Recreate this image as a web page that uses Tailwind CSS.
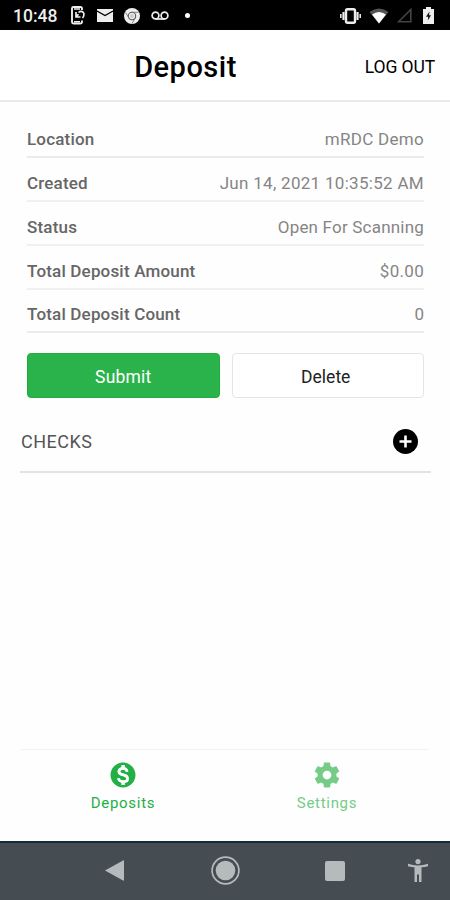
<!DOCTYPE html>
<html lang="en">
<head>
<meta charset="utf-8">
<title>Deposit</title>
<script src="https://cdn.jsdelivr.net/npm/@tailwindcss/browser@4"></script>
</head>
<body class="bg-white">
<div class="w-[450px] h-[900px] flex flex-col overflow-hidden bg-[#fefefe] font-['Roboto',sans-serif] text-black">
  <div class="h-[30px] shrink-0 bg-black flex items-center justify-between pl-[13px] pr-[14px] pt-px text-[#eee]">
    <div class="flex items-center">
      <span class="w-[57px] text-[17.5px] leading-[30px] font-medium">10:48</span>
      <svg class="w-4 h-[19px]" viewBox="0 0 16 19" fill="none" stroke="currentColor"><path d="M12 4V2.500Q12 1 10.500 1H3.500Q2 1 2 2.500V16Q2 17.500 3.500 17.500H10.500Q12 17.500 12 16V14.500" stroke-width="1.900"/><path d="M4 3H10M4 15.800H10" stroke-width="1.500"/><path d="M6 6V11H10.500M6.500 10.500L8.500 8.200" stroke-width="1.700"/><path d="M8.500 6.500Q11 4.200 13.200 6.300Q15 9 12.500 12" stroke-width="1.600"/></svg>
      <svg class="ml-[11px] w-4 h-[13px]" viewBox="0 0 16 13"><path fill="currentColor" d="M0 0H16V13H0Z"/><path d="M0 2L8 6.500L16 2" fill="none" stroke="#000" stroke-width="1.300"/></svg>
      <svg class="ml-[11px] w-4 h-4" viewBox="0 0 16 16" fill="none"><circle cx="8" cy="8" r="8" fill="currentColor"/><circle cx="8" cy="8" r="3.700" stroke="#555" stroke-width="1.100"/><path d="M8 4.300H14.500M4.900 10L1.700 4.600M11.100 10L8 15.500" stroke="#777" stroke-width=".9"/><circle cx="8" cy="8" r="2" fill="#ccc"/></svg>
      <svg class="ml-[11px] w-[18px] h-[9px]" viewBox="0 0 18 9" fill="none" stroke="currentColor" stroke-width="1.700"><circle cx="4.500" cy="4.500" r="3.400"/><circle cx="13.500" cy="4.500" r="3.400"/><path d="M4.500 8H13.500"/></svg>
      <span class="ml-4 w-[5px] h-[5px] rounded-full bg-white"></span>
    </div>
    <div class="flex items-center">
      <svg class="w-[21px] h-4" viewBox="0 0 21 16" fill="none" stroke="currentColor"><rect x="6" y="1.200" width="9" height="13.600" rx="1.500" stroke-width="2.400"/><path d="M3.500 4V12M17.500 4V12" stroke-width="2.200"/><path d="M.8 6V10M20.200 6V10" stroke-width="1.500"/></svg>
      <svg class="ml-2 w-5 h-4" viewBox="0 0 20 16"><path d="M.5 4Q10-3 19.500 4L10 15.500Z" fill="#555"/><path d="M3 6.500Q10 1.500 17 6.500L10 15.500Z" fill="#fff"/></svg>
      <svg class="ml-2 w-[15px] h-[15px]" viewBox="0 0 15 15"><path d="M1.500 13.800H13.800V1.500Z" fill="none" stroke="#454545" stroke-width="1.600"/></svg>
      <svg class="ml-[11px] mr-[2px] w-[11px] h-[17px]" viewBox="0 0 11 17"><path d="M3 0H8V2H11V17H0V2H3Z" fill="currentColor"/><path d="M6.500 4.500L3 9.700H5.200L4.800 13.500L8 8.200H6Z" fill="#111"/></svg>
    </div>
  </div>

  <header class="h-[72px] shrink-0 bg-white border-b-2 border-[#e9e9e9] grid grid-cols-[120px_131px_1fr] items-center">
    <span></span>
    <h1 class="text-center text-[29px] leading-9 font-medium tracking-[0.5px] pt-[4px]">Deposit</h1>
    <button class="justify-self-end mr-[15px] text-[17.5px] leading-6 pt-[4px] tracking-[-0.1px] whitespace-nowrap">LOG OUT</button>
  </header>

  <main class="flex-1 flex flex-col">
    <dl class="mx-[27px] mr-[26px] mt-3 text-[17px] leading-5 text-[#858585]">
      <div class="h-[44px] flex items-end justify-between pb-[7px] border-b-2 border-[#ebebeb]"><dt class="font-medium text-[#666] tracking-[0.18px]">Location</dt><dd class="tracking-[0.3px]">mRDC Demo</dd></div>
      <div class="h-[44px] flex items-end justify-between pb-[7px] border-b-2 border-[#f0f0f0]"><dt class="font-medium text-[#666] tracking-[0.18px]">Created</dt><dd class="tracking-[0.3px]">Jun 14, 2021 10:35:52 AM</dd></div>
      <div class="h-[44px] flex items-end justify-between pb-[7px] border-b-2 border-[#f0f0f0]"><dt class="font-medium text-[#666] tracking-[0.18px]">Status</dt><dd class="tracking-[0.2px]">Open For Scanning</dd></div>
      <div class="h-[43.5px] flex items-end justify-between pb-[7px] border-b-2 border-[#f0f0f0]"><dt class="font-medium text-[#666] tracking-[0.18px]">Total Deposit Amount</dt><dd class="tracking-[0.3px]">$0.00</dd></div>
      <div class="h-[43.5px] flex items-end justify-between pb-[7px] border-b-2 border-[#ebebeb]"><dt class="font-medium text-[#666] tracking-[0.18px]">Total Deposit Count</dt><dd>0</dd></div>
    </dl>
    <div class="ml-[27px] mr-[26px] mt-5 grid grid-cols-2 gap-3 text-[17.5px] leading-6">
      <button class="h-[45px] rounded-[4px] bg-[#2ab34b] border border-[#1fae3e] text-white pt-[2px] tracking-[0.2px]">Submit</button>
      <button class="h-[45px] rounded-[4px] bg-white border border-[#e5e5e5] text-[#222] pt-[2px] pr-1">Delete</button>
    </div>
    <div class="ml-5 mr-[19px] h-[75px] border-b-2 border-[#e3e3e3] flex items-center justify-between pt-[14px]">
      <h2 class="pl-px text-[18px] leading-6 text-[#555] tracking-[0.5px] pt-px">CHECKS</h2>
      <svg class="mr-[13px] w-[25px] h-[25px]" viewBox="0 0 25 25"><circle cx="12.500" cy="12.500" r="12.500"/><path d="M12.500 6.500V18.500M6.500 12.500H18.500" stroke="#fff" stroke-width="2.600"/></svg>
    </div>
  </main>

  <nav class="mx-[21px] h-[92px] shrink-0 border-t border-[#f3f3f3] grid grid-cols-2 text-[15px] leading-5 tracking-[0.7px]">
    <div class="flex flex-col items-center pt-[10px] text-[#22b045]">
      <svg class="w-[30px] h-[30px]" viewBox="0 0 24 24" fill="currentColor"><path d="M12 2C6.480 2 2 6.480 2 12s4.480 10 10 10 10-4.480 10-10S17.520 2 12 2zm1.410 16.090V20h-2.670v-1.930c-1.710-.36-3.160-1.460-3.270-3.400h1.960c.1 1.050.82 1.870 2.650 1.870 1.960 0 2.400-.98 2.400-1.590 0-.83-.44-1.610-2.670-2.140-2.480-.6-4.180-1.620-4.180-3.670 0-1.720 1.390-2.840 3.110-3.210V4h2.670v1.950c1.860.45 2.790 1.860 2.850 3.390H14.300c-.05-1.110-.64-1.870-2.220-1.870-1.500 0-2.400.68-2.400 1.640 0 .84.65 1.390 2.670 1.910s4.180 1.390 4.180 3.910c-.01 1.830-1.380 2.830-3.120 3.160z" stroke="none"/><path d="M15.200 9.300C14.900 7.600 13.700 6.700 12.100 6.700C10.300 6.700 8.800 7.600 8.800 9.200C8.800 10.900 10.200 11.400 12.200 11.900C14.400 12.400 15.700 13.200 15.700 14.900C15.700 16.500 14.300 17.300 12.200 17.300C10 17.300 8.700 16.300 8.400 14.700M12.080 4V7M12.080 17V20" fill="none" stroke="#fff" stroke-width="2.100"/></svg>
      <span class="mt-[3px]">Deposits</span>
    </div>
    <div class="flex flex-col items-center pt-[10px] text-[#74cc87]">
      <svg class="w-[30px] h-[30px]" viewBox="0 0 24 24" fill="currentColor"><path d="M19.430 12.980c.04-.32.07-.64.07-.98s-.03-.66-.07-.98l2.110-1.650c.19-.15.24-.42.12-.64l-2-3.460c-.12-.22-.39-.3-.61-.22l-2.490 1c-.52-.4-1.080-.73-1.690-.98l-.38-2.650C14.460 2.180 14.250 2 14 2h-4c-.25 0-.46.18-.49.42l-.38 2.650c-.61.25-1.170.59-1.690.98l-2.490-1c-.23-.09-.49 0-.61.22l-2 3.460c-.13.22-.07.49.12.64l2.110 1.650c-.04.32-.07.65-.07.98s.03.66.07.98l-2.110 1.650c-.19.15-.24.42-.12.64l2 3.460c.12.22.39.3.61.22l2.490-1c.52.4 1.080.73 1.690.98l.38 2.650c.03.24.24.42.49.42h4c.25 0 .46-.18.49-.42l.38-2.650c.61-.25 1.170-.59 1.690-.98l2.490 1c.23.09.49 0 .61-.22l2-3.460c.12-.22.07-.49-.12-.64l-2.110-1.650zM12 15.500c-1.930 0-3.500-1.570-3.500-3.500s1.570-3.500 3.500-3.500 3.500 1.570 3.500 3.500-1.570 3.500-3.500 3.500z"/></svg>
      <span class="mt-[3px]">Settings</span>
    </div>
  </nav>

  <footer class="h-[59px] shrink-0 bg-[#454d52] border-t-2 border-[#142b39] grid grid-cols-[170px_110px_110px_1fr] items-center pb-[2px] text-[#b5babd]">
    <svg class="justify-self-end mr-[46px] w-[19px] h-[21px]" viewBox="0 0 19 21"><path d="M0 10.500L18 .5Q19 0 19 1V20Q19 21 18 20.500Z" fill="currentColor"/></svg>
    <svg class="justify-self-center w-[29px] h-[29px]" viewBox="0 0 29 29"><circle cx="14.500" cy="14.500" r="13.400" fill="none" stroke="currentColor" stroke-width="1.700"/><circle cx="14.500" cy="14.500" r="9.800" fill="currentColor"/></svg>
    <span class="justify-self-center w-5 h-5 rounded-[2px] bg-[#b5babd]"></span>
    <svg class="ml-[18px] w-5 h-[23px]" viewBox="0 0 20 23" fill="currentColor"><circle cx="10" cy="2.600" r="2.600"/><path d="M0 4.800Q10 8 20 4.800L20 7.300Q16.500 8.200 13.500 8.300V23H11V15.500H9V23H6.500V8.300Q3.500 8.200 0 7.300Z"/></svg>
  </footer>
</div>
</body>
</html>
